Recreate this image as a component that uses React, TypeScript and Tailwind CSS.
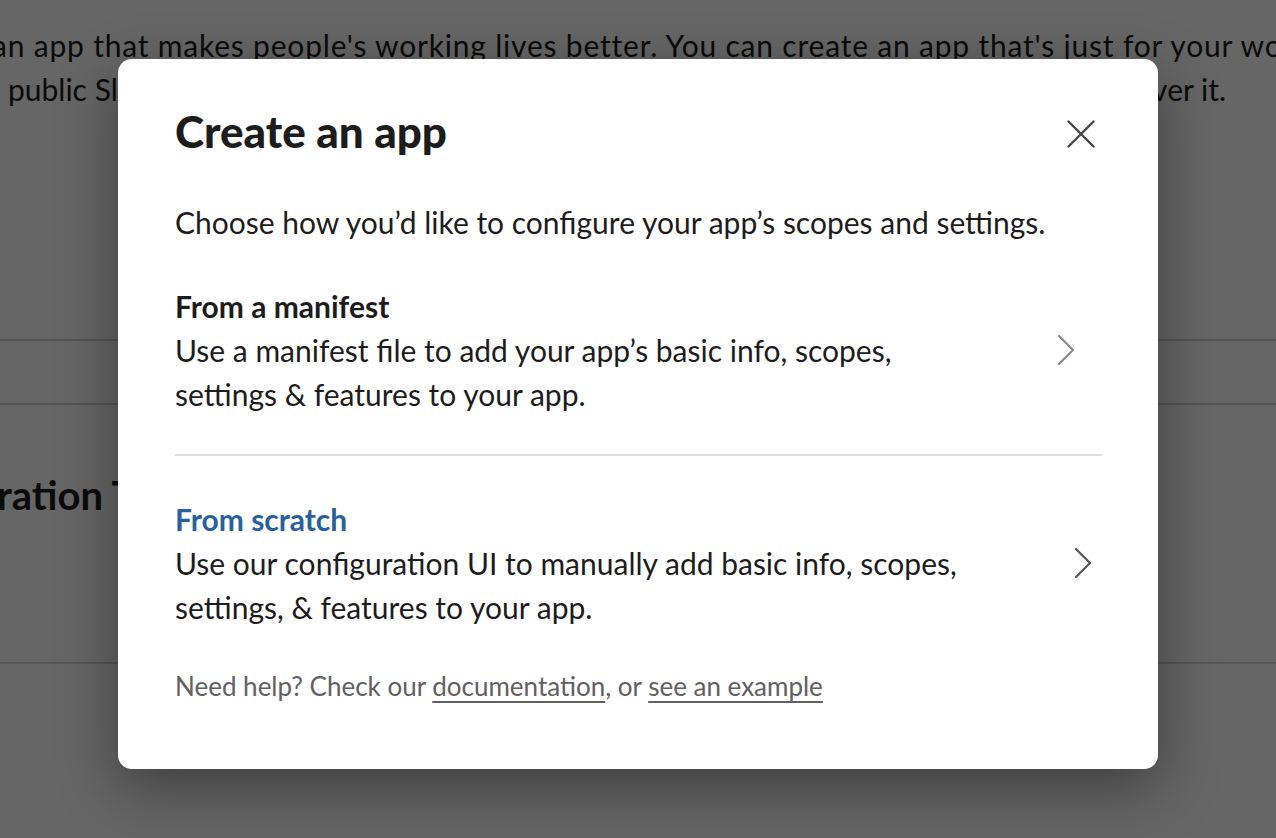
function Chevron({ className }: { className?: string }) {
  return (
    <svg width="18" height="30" viewBox="0 0 18 30" fill="none" className={className}>
      <path d="M2 1l14 14L2 29" stroke="currentColor" strokeWidth="2.2" strokeLinecap="round" strokeLinejoin="round" />
    </svg>
  )
}

function CloseIcon() {
  return (
    <svg width="28" height="28" viewBox="0 0 28 28" fill="none">
      <path d="M1.5 1.5l25 25M26.5 1.5l-25 25" stroke="currentColor" strokeWidth="2.4" strokeLinecap="round" />
    </svg>
  )
}

function BackgroundPage() {
  return (
    <div className="bg-white text-[#1d1c1d]">
      <div className="whitespace-nowrap pt-[23px] text-[30px] leading-[44px]">
        <p className="ml-[-8px] tracking-[0.8px]">
          an app that makes people's working lives better. You can create an app that's just for your workspace
        </p>
        <p className="flex justify-between pl-[8px] pr-[50px]">
          <span>public Slack app</span>
          <span>where anyone on Slack can discover it.</span>
        </p>
      </div>
      <div className="h-[228px]" />
      <div className="h-[66px] border-y-2 border-[#cfcfcf]" />
      <div className="h-[257px] pt-[66px]">
        <h2 className="ml-[-3px] whitespace-nowrap text-[40px] font-bold leading-[48px]">ration Tokens</h2>
      </div>
      <div className="h-[200px] border-t-2 border-[#d6d6d6]" />
    </div>
  )
}

export default function App() {
  return (
    <div className="relative h-[838px] w-[1276px] overflow-hidden font-['Lato',sans-serif]">
      <BackgroundPage />

      {/* overlay */}
      <div className="absolute inset-0 bg-black/60" />

      {/* modal */}
      <div className="absolute inset-0 flex justify-center pt-[59px]">
        <div className="h-[710px] w-[1040px] rounded-[14px] bg-white pl-[57px] pr-[56px] pt-[46px] text-[#1d1c1d] shadow-[0_18px_60px_rgba(0,0,0,0.4)]">
          <div className="flex items-center justify-between">
            <h1 className="text-[44px] font-black leading-[52px]">Create an app</h1>
            <button className="mr-[7px] mt-[6px] flex h-[28px] w-[28px] items-center justify-center text-[#454545]" aria-label="Close">
              <CloseIcon />
            </button>
          </div>

          <p className="mt-[43px] text-[30px] leading-[44px]">
            Choose how you’d like to configure your app’s scopes and settings.
          </p>

          <button className="flex w-full items-center justify-between pb-[38px] pt-[40px] text-left">
            <div className="w-[800px]">
              <div className="text-[30px] font-bold leading-[44px]">From a manifest</div>
              <div className="text-[30px] leading-[44px]">
                Use a manifest file to add your app’s basic info, scopes, settings &amp; features to your app.
              </div>
            </div>
            <Chevron className="mr-[27px] text-[#8a8a8a]" />
          </button>

          <div className="h-[2px] bg-[#dddddd]" />

          <button className="flex w-full items-center justify-between pb-[38px] pt-[41px] text-left">
            <div className="w-[800px]">
              <div className="text-[30px] font-bold leading-[44px] text-[#2a5f9f]">From scratch</div>
              <div className="text-[30px] leading-[44px]">
                Use our configuration UI to manually add basic info, scopes, settings, &amp; features to your app.
              </div>
            </div>
            <Chevron className="mr-[10px] text-[#555555]" />
          </button>

          <p className="text-[26px] leading-[38px] text-[#616061]">
            Need help? Check our{' '}
            <a className="underline decoration-[1.5px] underline-offset-[5px]">documentation</a>, or{' '}
            <a className="underline decoration-[1.5px] underline-offset-[5px]">see an example</a>
          </p>
        </div>
      </div>
    </div>
  )
}
